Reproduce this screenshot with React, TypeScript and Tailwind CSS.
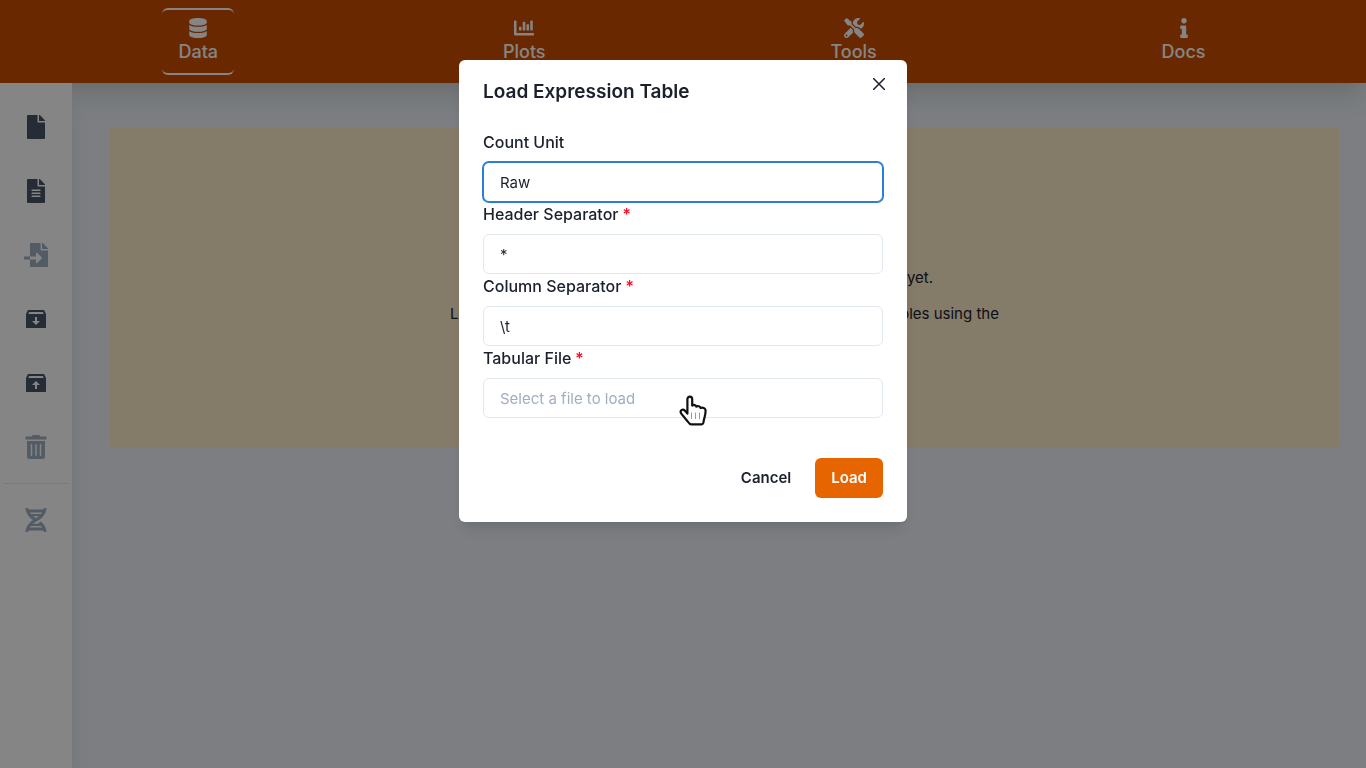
import React from 'react';
import { FaChartBar, FaDatabase, FaDna, FaFile, FaFileAlt, FaFileImport, FaInfo, FaTools, FaTrashAlt } from 'react-icons/fa';
import { RiInboxArchiveFill, RiInboxUnarchiveFill } from 'react-icons/ri';
import type { IconType } from 'react-icons';

const navItems: { label: string; icon: IconType; active?: boolean }[] = [
  { label: 'Data', icon: FaDatabase, active: true },
  { label: 'Plots', icon: FaChartBar },
  { label: 'Tools', icon: FaTools },
  { label: 'Docs', icon: FaInfo },
];

const tools: { label: string; icon: IconType; disabled?: boolean }[] = [
  { label: 'New', icon: FaFile },
  { label: 'Load expression table', icon: FaFileAlt },
  { label: 'Import gene info', icon: FaFileImport, disabled: true },
  { label: 'Load session', icon: RiInboxArchiveFill },
  { label: 'Save session', icon: RiInboxUnarchiveFill },
  { label: 'Remove data', icon: FaTrashAlt, disabled: true },
];

function Header() {
  return (
    <header className="relative z-10 bg-[#cb4e00] py-2 shadow-[0_20px_25px_-5px_rgba(0,0,0,0.1),0_10px_10px_-5px_rgba(0,0,0,0.04)]">
      <nav className="flex justify-around pl-9 pr-[18px]">
        {navItems.map(({ label, icon: Icon, active }) => (
          <a
            key={label}
            href={`#${label.toLowerCase()}`}
            className={`flex h-[67px] flex-col items-center rounded-md border-y-2 px-4 pt-2 text-lg font-medium leading-7 text-white ${
              active ? 'border-white' : 'border-transparent'
            }`}
          >
            <Icon className="size-5" />
            {label}
          </a>
        ))}
      </nav>
    </header>
  );
}

function ToolButton({ label, icon: Icon, disabled }: { label: string; icon: IconType; disabled?: boolean }) {
  return (
    <button
      type="button"
      aria-label={label}
      disabled={disabled}
      className={`flex h-16 w-full items-center justify-center ${disabled ? 'text-[#a0aec0]' : 'text-[#4a5568]'}`}
    >
      <Icon className="size-6" />
    </button>
  );
}

function Field({
  id,
  label,
  required,
  value,
  placeholder,
  focused,
}: {
  id: string;
  label: string;
  required?: boolean;
  value?: string;
  placeholder?: string;
  focused?: boolean;
}) {
  return (
    <div>
      <label htmlFor={id} className="mb-2 block font-medium leading-6">
        {label}
        {required && <span className="ml-1 text-[#ff0019]">*</span>}
      </label>
      <input
        id={id}
        type="text"
        defaultValue={value}
        placeholder={placeholder}
        className={`block h-10 w-full rounded-md border bg-white px-4 text-[15px] outline-none placeholder:text-[#a0aec0] ${
          focused ? 'border-[#2b7fd3] ring-1 ring-[#2b7fd3]' : 'border-[#e2e8f0]'
        }`}
      />
    </div>
  );
}

function LoadDialog() {
  return (
    <div
      role="dialog"
      aria-modal="true"
      aria-labelledby="dialog-title"
      className="relative w-full max-w-md rounded-md bg-white shadow-lg"
    >
      <h2 id="dialog-title" className="px-6 pb-[15px] pt-[17px] text-[19px] font-semibold leading-[30px]">
        Load Expression Table
      </h2>
      <button type="button" aria-label="Close" className="absolute right-3 top-2 flex size-8 items-center justify-center">
        <svg viewBox="0 0 12 12" className="size-3" fill="none" stroke="currentColor" strokeWidth="1.5" strokeLinecap="round">
          <path d="M.5.5l11 11M11.5.5l-11 11" />
        </svg>
      </button>
      <form>
        <div className="px-6 py-2">
          <Field id="unit" label="Count Unit" value="Raw" focused />
          <Field id="header-separator" label="Header Separator" value="*" required />
          <Field id="column-separator" label="Column Separator" value="\t" required />
          <Field id="file" label="Tabular File" placeholder="Select a file to load" required />
        </div>
        <div className="flex justify-end gap-2 px-6 pb-6 pt-8 text-[15px] font-semibold">
          <button type="button" className="h-10 rounded-md px-4">
            Cancel
          </button>
          <button type="button" className="h-10 rounded-md bg-[#e76500] px-4 text-white">
            Load
          </button>
        </div>
      </form>
      <svg viewBox="0 0 28 32" className="pointer-events-none absolute left-[220px] top-[335px] h-8 w-7" fill="none">
        <path
          d="M8.4 18.6V4.3C8.4 .7 13.2 .7 13.2 4.3V10.6C14.4 9.5 17 9.9 17.3 11.6C18.7 10.6 21.2 11.1 21.6 12.9C23.5 12 26.6 12.9 26.6 15.6C26.6 20.5 25.3 22.5 24.8 25.5C24.5 28.2 23.9 29.4 22.6 29.4H12.2C10.6 29.4 10 28.5 8.7 26.5L2.3 18.6C.3 15.5 3.6 13.4 5.9 15.6Z"
          fill="white"
          stroke="#111"
          strokeWidth="2.2"
          strokeLinejoin="round"
        />
        <path d="M12.5 17.5v6.5M16.5 17.5v6.5M20.5 17.5v6.5" stroke="#999" strokeWidth="1" />
      </svg>
    </div>
  );
}

export default function App() {
  return (
    <div className="flex min-h-screen flex-col bg-[#edf2f7] font-['Inter','Liberation_Sans',sans-serif] text-[#1a202c]">
      <Header />
      <div className="flex grow">
        <aside className="relative z-20 w-[72px] shrink-0 bg-white px-1 pt-3 shadow-[0_20px_25px_-5px_rgba(0,0,0,0.1),0_10px_10px_-5px_rgba(0,0,0,0.04)]">
          {tools.map((tool) => (
            <ToolButton key={tool.label} {...tool} />
          ))}
          <hr className="my-1 border-[#e2e8f0]" />
          <ToolButton label="Genes" icon={FaDna} disabled />
        </aside>
        <main className="grow pl-[38px] pr-[27px] pt-11">
          <section className="h-80 bg-[#feebc8] pt-[139px] text-center text-[15px] leading-6">
            <p className="mb-3">No gene expression data has been loaded into the app yet.</p>
            <p>Load a new gene expression matrix, or restore a saved set of tables using the</p>
            <p>toolbar on the left.</p>
          </section>
        </main>
      </div>
      <div className="fixed inset-0 z-30 flex items-start justify-center bg-black/48 pt-[60px]">
        <LoadDialog />
      </div>
    </div>
  );
}
